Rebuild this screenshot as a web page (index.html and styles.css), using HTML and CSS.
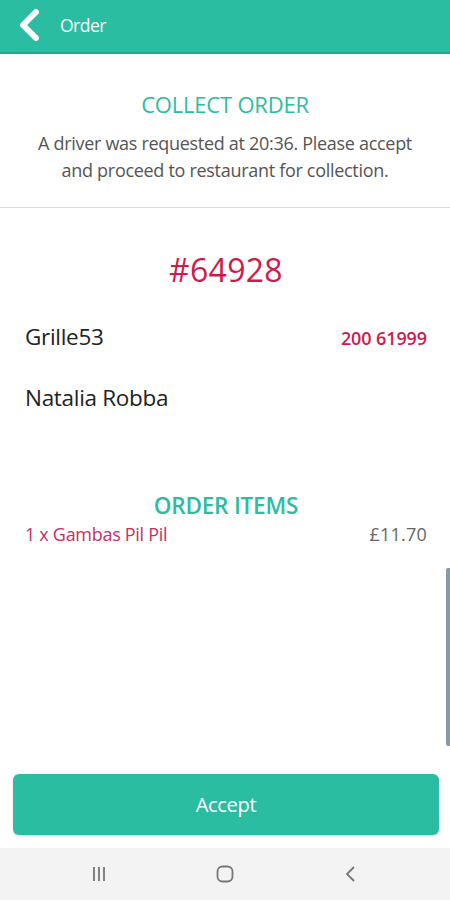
FILE: index.html
```html
<!DOCTYPE html>
<html>
<head>
<meta charset="utf-8">
<link rel="stylesheet" href="styles.css">
</head>
<body>
<div class="screen">
  <header class="topbar">
    <svg class="back" width="24" height="34" viewBox="0 0 24 34"><path d="M19 4 L6 17 L19 30" fill="none" stroke="#fff" stroke-width="6" stroke-linecap="round" stroke-linejoin="round"/></svg>
    <span class="title">Order</span>
  </header>
  <section class="intro">
    <h1 class="heading">COLLECT ORDER</h1>
    <p class="desc">A driver was requested at 20:36. Please accept<br>and proceed to restaurant for collection.</p>
  </section>
  <main class="content">
    <div class="ordernum">#64928</div>
    <div class="row">
      <span class="name">Grille53</span>
      <span class="phone">200 61999</span>
    </div>
    <div class="row customer">
      <span class="name">Natalia Robba</span>
    </div>
    <h2 class="items-title">ORDER ITEMS</h2>
    <div class="item">
      <span class="item-name">1 x Gambas Pil Pil</span>
      <span class="item-price">£11.70</span>
    </div>
    <div class="scrollbar"></div>
  </main>
  <div class="footer">
    <button class="accept">Accept</button>
  </div>
  <nav class="navbar">
    <svg width="20" height="20" viewBox="0 0 20 20"><path d="M5 3v14M10 3v14M15 3v14" stroke="#777" stroke-width="1.8" fill="none"/></svg>
    <svg width="20" height="20" viewBox="0 0 20 20"><rect x="2.5" y="2.5" width="15" height="15" rx="5" stroke="#777" stroke-width="1.8" fill="none"/></svg>
    <svg width="20" height="20" viewBox="0 0 20 20"><path d="M13 3 L6 10 L13 17" stroke="#777" stroke-width="1.8" fill="none"/></svg>
  </nav>
</div>
</body>
</html>
```
FILE: styles.css
```css
* { box-sizing: border-box; }
html, body { margin: 0; padding: 0; }
body {
  width: 450px;
  height: 900px;
  font-family: "Open Sans", "Liberation Sans", sans-serif;
  background: #fff;
  overflow: hidden;
}
.screen {
  width: 450px;
  height: 900px;
  display: flex;
  flex-direction: column;
}
.topbar {
  height: 54px;
  background: #2bbda1;
  border-bottom: 2px solid #22a88e;
  display: flex;
  align-items: center;
  padding-left: 17px;
  gap: 19px;
  flex-shrink: 0;
}
.back { display: block; margin-top: -2px; }
.title {
  color: #fff;
  font-size: 17.5px;
  letter-spacing: -0.5px;
  margin-top: -3px;
}
.intro {
  height: 154px;
  border-bottom: 1px solid #dcdcdc;
  text-align: center;
  flex-shrink: 0;
  padding-top: 35px;
}
.heading {
  margin: 0;
  font-size: 22px;
  font-weight: 400;
  color: #2bbda1;
  line-height: 30px;
  letter-spacing: -0.2px;
}
.desc {
  margin: 11px 0 0;
  font-size: 18px;
  line-height: 27px;
  color: #555;
  letter-spacing: -0.3px;
}
.content {
  flex: 1;
  position: relative;
  padding: 44px 23px 0 25px;
}
.ordernum {
  text-align: center;
  font-size: 32px;
  color: #d11a4b;
  line-height: 36px;
  letter-spacing: 0.3px;
}
.row {
  display: flex;
  justify-content: space-between;
  align-items: baseline;
  margin-top: 34px;
  line-height: 30px;
}
.customer { margin-top: 30px; }
.name {
  font-size: 22.5px;
  color: #222;
  letter-spacing: -0.3px;
}
.phone {
  font-size: 18px;
  color: #d11a4b;
  font-weight: 600;
  letter-spacing: -0.1px;
}
.items-title {
  margin: 78px 0 0;
  text-align: center;
  font-size: 22.5px;
  font-weight: 600;
  color: #2bbda1;
  line-height: 30px;
  letter-spacing: -0.2px;
}
.item {
  display: flex;
  justify-content: space-between;
  align-items: baseline;
  line-height: 24px;
  margin-top: 1px;
}
.item-name {
  font-size: 18px;
  color: #c8305f;
  letter-spacing: -0.3px;
}
.item-price {
  font-size: 18px;
  color: #666;
  letter-spacing: 0.2px;
}
.scrollbar {
  position: absolute;
  right: 0;
  top: 360px;
  width: 4px;
  height: 178px;
  background: #8a9aa3;
  border-radius: 2px 0 0 2px;
}
.footer {
  padding: 0 11px 13px 13px;
  flex-shrink: 0;
}
.accept {
  display: block;
  width: 100%;
  height: 61px;
  border: none;
  border-radius: 6px;
  background: #2bbda1;
  color: #fff;
  font-family: inherit;
  font-size: 20px;
  letter-spacing: -0.3px;
  box-shadow: 0 1px 2px rgba(0,0,0,0.15);
}
.navbar {
  height: 52px;
  background: #f3f3f3;
  display: flex;
  justify-content: center;
  align-items: center;
  gap: 106px;
  flex-shrink: 0;
}
.navbar svg { display: block; }
```
